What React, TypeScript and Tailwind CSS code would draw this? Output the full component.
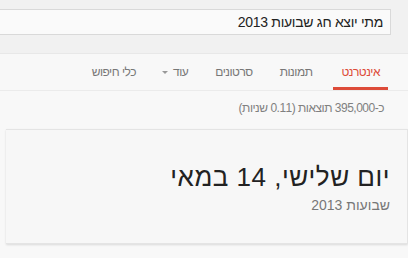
const tabs = [
  { label: 'אינטרנט', active: true, gap: '' },
  { label: 'תמונות', gap: 'mr-[13px]' },
  { label: 'סרטונים', gap: 'mr-[11px]' },
  { label: 'עוד', more: true, gap: 'mr-[11px]' },
  { label: 'כלי חיפוש', gap: 'mr-[10px]' },
];

export default function App() {
  return (
    <div dir="rtl" className="w-[408px] h-[258px] overflow-hidden bg-[#f8f8f8] font-['Liberation_Sans',Arial,sans-serif]">
      {/* search header */}
      <div className="h-[54px] bg-[#f1f1f1] pt-[9px] border-b border-[#e8e8e8]">
        <div className="mr-[17px] ml-[-10px] h-[26px] bg-[#fafafa] border border-[#d9d9d9] flex items-center pr-[7px] text-[14px] tracking-[-0.3px] text-[#222]">
          מתי יוצא חג שבועות 2013
        </div>
      </div>

      {/* tabs */}
      <div className="h-[37px] bg-[#f8f8f8] border-b border-[#ebebeb] flex items-stretch pr-[20px] text-[12px] tracking-[-0.5px]">
        {tabs.map((t) => (
          <div
            key={t.label}
            className={`flex items-center px-[8px] pt-[2px] border-b-[3px] ${
              t.active ? 'border-[#dd4b39] text-[#dd4b39]' : 'border-transparent text-[#777]'
            } ${t.gap}`}
          >
            {t.label}
            {t.more && (
              <span className="mr-[5px] mt-[1px] w-0 h-0 border-x-[3px] border-x-transparent border-t-[3px] border-t-[#999]" />
            )}
          </div>
        ))}
      </div>

      {/* result stats */}
      <div className="pr-[24px] pt-[8px] h-[38px] text-[12px] tracking-[-0.5px] text-[#808080]">
        כ-395,000 תוצאות (0.11 שניות)
      </div>

      {/* answer card */}
      <div className="w-[402px] h-[115px] bg-[#f7f7f7] border border-l-0 border-[#e4e4e4] shadow-[0_1px_2px_rgba(0,0,0,0.12)] pr-[17px] pt-[32px]">
        <div className="text-[26px] leading-[30px] tracking-[0.5px] text-[#222]">יום שלישי, 14 במאי</div>
        <div className="mt-[3px] text-[14px] text-[#777]">שבועות 2013</div>
      </div>
    </div>
  );
}
